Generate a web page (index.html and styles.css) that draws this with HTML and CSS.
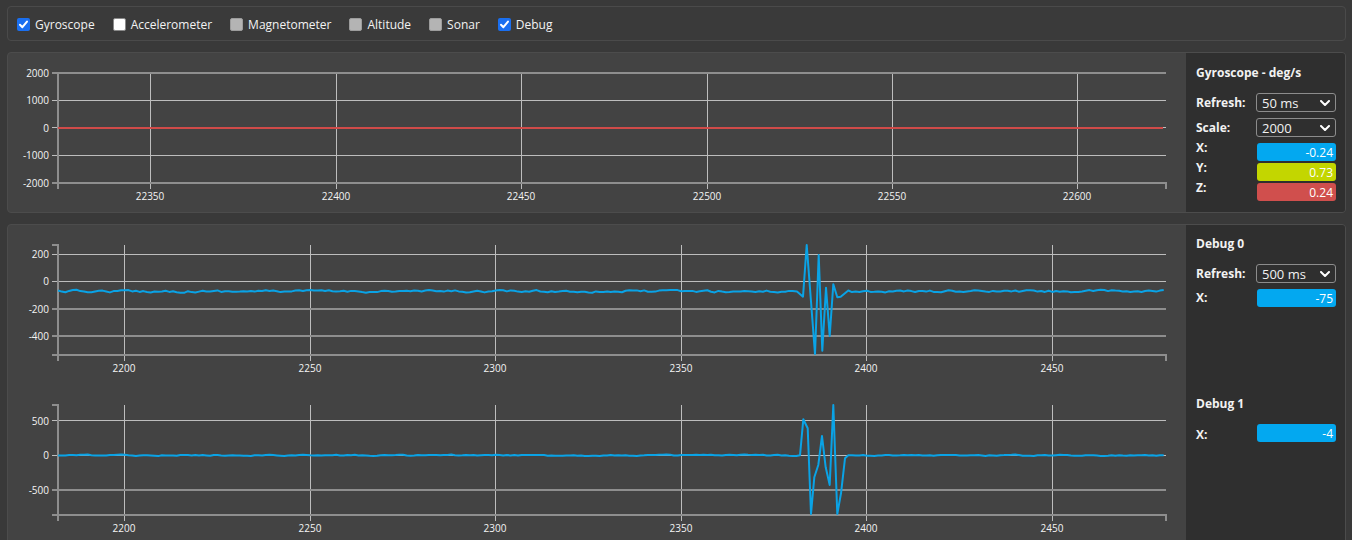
FILE: index.html
```html
<!DOCTYPE html>
<html lang="en">
<head>
<meta charset="utf-8">
<title>Sensors</title>
<link rel="stylesheet" href="styles.css">
</head>
<body>
<div class="toolbar">
  <label class="opt"><span class="cb on"><svg viewBox="0 0 13 13" width="13" height="13"><path d="M3 6.8 L5.4 9.2 L10 3.6"/></svg></span>Gyroscope</label>
  <label class="opt"><span class="cb off"></span>Accelerometer</label>
  <label class="opt"><span class="cb dis"></span>Magnetometer</label>
  <label class="opt"><span class="cb dis"></span>Altitude</label>
  <label class="opt"><span class="cb dis"></span>Sonar</label>
  <label class="opt"><span class="cb on"><svg viewBox="0 0 13 13" width="13" height="13"><path d="M3 6.8 L5.4 9.2 L10 3.6"/></svg></span>Debug</label>
</div>

<div class="panel">
  <div class="plots">
    <svg class="chart" viewBox="8 53 1178 159" width="1178" height="159">
      <g class="grid">
        <line x1="52" y1="100.5" x2="1166" y2="100.5"/>
        <line x1="52" y1="127.5" x2="1166" y2="127.5"/>
        <line x1="52" y1="155.5" x2="1166" y2="155.5"/>
        <line x1="150.5" y1="73" x2="150.5" y2="189"/>
        <line x1="336.5" y1="73" x2="336.5" y2="189"/>
        <line x1="521.5" y1="73" x2="521.5" y2="189"/>
        <line x1="707.5" y1="73" x2="707.5" y2="189"/>
        <line x1="892.5" y1="73" x2="892.5" y2="189"/>
        <line x1="1077.5" y1="73" x2="1077.5" y2="189"/>
      </g>
      <g class="axis">
        <path d="M52,73H1166"/>
        <path d="M52,183H1166V189"/>
        <path d="M58,72V189"/>
      </g>
      <line class="red" x1="58" y1="128" x2="1163" y2="128"/>
      <g class="ylab">
        <text x="49" y="73">2000</text>
        <text x="49" y="100">1000</text>
        <text x="49" y="128">0</text>
        <text x="49" y="155">-1000</text>
        <text x="49" y="183">-2000</text>
      </g>
      <g class="xlab">
        <text x="150" y="196">22350</text>
        <text x="336" y="196">22400</text>
        <text x="521" y="196">22450</text>
        <text x="707" y="196">22500</text>
        <text x="892" y="196">22550</text>
        <text x="1077" y="196">22600</text>
      </g>
    </svg>
  </div>
  <div class="side gyro">
    <div class="title">Gyroscope - deg/s</div>
    <div class="ctrl">
      <span class="lbl">Refresh:</span>
      <div class="select"><span>50 ms</span><svg viewBox="0 0 10 6" width="10" height="6"><path d="M1 1 L5 5 L9 1"/></svg></div>
    </div>
    <div class="ctrl">
      <span class="lbl">Scale:</span>
      <div class="select"><span>2000</span><svg viewBox="0 0 10 6" width="10" height="6"><path d="M1 1 L5 5 L9 1"/></svg></div>
    </div>
    <div class="vals">
      <div class="val"><span class="lbl">X:</span><span class="bar blue">-0.24</span></div>
      <div class="val"><span class="lbl">Y:</span><span class="bar lime">0.73</span></div>
      <div class="val"><span class="lbl">Z:</span><span class="bar red">0.24</span></div>
    </div>
  </div>
</div>

<div class="panel">
  <div class="plots">
    <svg class="chart" viewBox="8 225 1178 160" width="1178" height="160">
      <g class="grid">
        <line x1="52" y1="254.5" x2="1166" y2="254.5"/>
        <line x1="52" y1="281.5" x2="1166" y2="281.5"/>
        <line x1="124.5" y1="245" x2="124.5" y2="361"/>
        <line x1="310.5" y1="245" x2="310.5" y2="361"/>
        <line x1="495.5" y1="245" x2="495.5" y2="361"/>
        <line x1="681.5" y1="245" x2="681.5" y2="361"/>
        <line x1="866.5" y1="245" x2="866.5" y2="361"/>
        <line x1="1052.5" y1="245" x2="1052.5" y2="361"/>
      </g>
      <g class="axis">
        <path d="M52,309H1166"/>
        <path d="M52,336H1166"/>
        <path d="M52,245H58"/>
        <path d="M52,355H1166V361"/>
        <path d="M58,244V361"/>
      </g>
      <polyline id="d0line" class="blue" points="58,291 1166,291"/>
      <g class="ylab">
        <text x="49" y="254">200</text>
        <text x="49" y="281">0</text>
        <text x="49" y="308.5">-200</text>
        <text x="49" y="336">-400</text>
      </g>
      <g class="xlab">
        <text x="124" y="367.5">2200</text>
        <text x="310" y="367.5">2250</text>
        <text x="495" y="367.5">2300</text>
        <text x="681" y="367.5">2350</text>
        <text x="866" y="367.5">2400</text>
        <text x="1052" y="367.5">2450</text>
      </g>
    </svg>
    <svg class="chart" viewBox="8 385 1178 160" width="1178" height="160">
      <g class="grid">
        <line x1="52" y1="420.5" x2="1166" y2="420.5"/>
        <line x1="52" y1="455.5" x2="1166" y2="455.5"/>
        <line x1="124.5" y1="405" x2="124.5" y2="521"/>
        <line x1="310.5" y1="405" x2="310.5" y2="521"/>
        <line x1="495.5" y1="405" x2="495.5" y2="521"/>
        <line x1="681.5" y1="405" x2="681.5" y2="521"/>
        <line x1="866.5" y1="405" x2="866.5" y2="521"/>
        <line x1="1052.5" y1="405" x2="1052.5" y2="521"/>
      </g>
      <g class="axis">
        <path d="M52,490H1166"/>
        <path d="M52,405H58"/>
        <path d="M52,515H1166V521"/>
        <path d="M58,404V521"/>
      </g>
      <polyline id="d1line" class="blue" points="58,455 1166,455"/>
      <g class="ylab">
        <text x="49" y="420.5">500</text>
        <text x="49" y="455">0</text>
        <text x="49" y="490">-500</text>
      </g>
      <g class="xlab">
        <text x="124" y="527.5">2200</text>
        <text x="310" y="527.5">2250</text>
        <text x="495" y="527.5">2300</text>
        <text x="681" y="527.5">2350</text>
        <text x="866" y="527.5">2400</text>
        <text x="1052" y="527.5">2450</text>
      </g>
    </svg>
  </div>
  <div class="side">
    <div class="block">
      <div class="title">Debug 0</div>
      <div class="ctrl">
        <span class="lbl">Refresh:</span>
        <div class="select"><span>500 ms</span><svg viewBox="0 0 10 6" width="10" height="6"><path d="M1 1 L5 5 L9 1"/></svg></div>
      </div>
      <div class="vals">
        <div class="val"><span class="lbl">X:</span><span class="bar blue">-75</span></div>
      </div>
    </div>
    <div class="block">
      <div class="title">Debug 1</div>
      <div class="vals first">
        <div class="val"><span class="lbl">X:</span><span class="bar blue">-4</span></div>
      </div>
    </div>
  </div>
</div>
<script src="script.js"></script>
</body>
</html>
```

FILE: styles.css
```css
* { box-sizing: border-box; }
html, body { margin: 0; height: 100%; }
body {
  background: #393939;
  color: #f2f2f2;
  font-family: "Open Sans", "Liberation Sans", sans-serif;
  padding: 6px 6px 0 7px;
  overflow: hidden;
}

.toolbar {
  height: 35px;
  border: 1px solid #4a4a4a;
  border-radius: 4px;
  background: #3a3a3a;
  display: flex;
  align-items: center;
  gap: 18px;
  padding: 1px 0 0 9px;
  font-size: 12px;
}
.opt { display: flex; align-items: center; gap: 5px; cursor: default; }
.cb {
  width: 13px; height: 13px;
  border-radius: 2px;
  display: block;
  flex: none;
  margin-top: 1px;
}
.cb svg { display: block; }
.cb path { fill: none; stroke: #fff; stroke-width: 2; stroke-linecap: round; stroke-linejoin: round; }
.cb.on { background: #1a6ff0; }
.cb.off { background: #fff; border: 1px solid #8a8a8a; }
.cb.dis { background: #b4b4b4; border: 1px solid #9c9c9c; }

.panel {
  margin-top: 11px;
  border: 1px solid #4c4c4c;
  border-radius: 4px;
  background: #434343;
  display: flex;
  overflow: hidden;
}
.plots { width: 1178px; display: flex; flex-direction: column; }
.chart { display: block; }
.grid line { stroke: #bdbdbd; stroke-width: 1; }
.axis path { stroke: #8e8e8e; stroke-width: 2; fill: none; }
.red { stroke: #d04b49; stroke-width: 2; }
polyline.blue { fill: none; stroke: #0aa3e6; stroke-width: 2; stroke-linejoin: round; }
.ylab text, .xlab text {
  font-family: "Open Sans", "Liberation Sans", sans-serif;
  font-size: 10px;
  fill: #f4f4f4;
  dominant-baseline: central;
}
.ylab text { text-anchor: end; }
.xlab text { text-anchor: middle; }

.side {
  width: 159px;
  background: #2f2f2f;
  font-size: 12px;
}
.side.gyro { padding: 12px 9px 0 10px; }
.block { height: 160px; padding: 11px 9px 0 10px; }
.title { font-weight: 700; line-height: 16px; margin-bottom: 12px; }
.lbl { width: 60px; flex: none; font-weight: 700; line-height: 14px; }
.ctrl { display: flex; align-items: center; height: 19px; margin-bottom: 6px; }
.select {
  width: 80px; height: 19px;
  border: 1px solid #8c8c8c;
  border-radius: 3px;
  display: flex;
  align-items: center;
  justify-content: space-between;
  padding: 0 5px 0 5px;
  font-size: 13px;
  color: #f2f2f2;
}
.select svg { display: block; }
.select path { fill: none; stroke: #fff; stroke-width: 2; stroke-linecap: round; stroke-linejoin: round; }
.vals { display: flex; flex-direction: column; gap: 2px; }
.val { display: flex; align-items: flex-start; }
.val .lbl { margin-top: -2px; }
.block .val .lbl { margin-top: 2px; }
.block .vals.first .val .lbl { margin-top: 4px; }
.bar {
  width: 79px; height: 18px;
  margin-left: 1px;
  border-radius: 3px;
  text-align: right;
  padding-right: 3px;
  line-height: 19px;
  color: #fff;
  font-size: 12px;
}
.bar.blue { background: #03a8f0; }
.bar.lime { background: #c3d600; }
.bar.red { background: #d04f4d; }
```

FILE: script.js
```js
(function () {
  var seed = 12345;
  function rnd() {
    seed = (seed * 16807) % 2147483647;
    return seed / 2147483647;
  }
  function flat(from, to, base, amp, out) {
    var prev = 0;
    for (var x = from; x <= to; x += 3.71) {
      prev = prev * 0.5 + (rnd() - 0.5) * 2 * amp;
      out.push([x, base + prev]);
    }
  }
  function build(id, base, amp, spike) {
    var pts = [];
    flat(58, spike[0][0] - 2, base, amp, pts);
    pts = pts.concat(spike);
    flat(spike[spike.length - 1][0] + 3.71, 1166, base, amp, pts);
    document.getElementById(id).setAttribute('points', pts.map(function (p) {
      return p[0].toFixed(1) + ',' + p[1].toFixed(1);
    }).join(' '));
  }
  build('d0line', 291.3, 1.0, [[797, 291.5], [803, 296.7], [806.7, 245], [815, 354], [818.7, 255], [822.3, 350.7], [826, 287.7], [829.7, 336], [833.3, 284.3], [837.3, 297.3], [840.7, 296.7], [848.3, 290.5]]);
  build('d1line', 455.3, 0.5, [[800, 455.3], [803.3, 419.3], [807.7, 428.3], [811, 514], [814.3, 477.3], [818.3, 465], [822, 436], [825.7, 467.3], [829.7, 485], [833.3, 405], [837.3, 514], [841, 493.3], [845, 458.3], [848.3, 455.3]]);
})();
```
